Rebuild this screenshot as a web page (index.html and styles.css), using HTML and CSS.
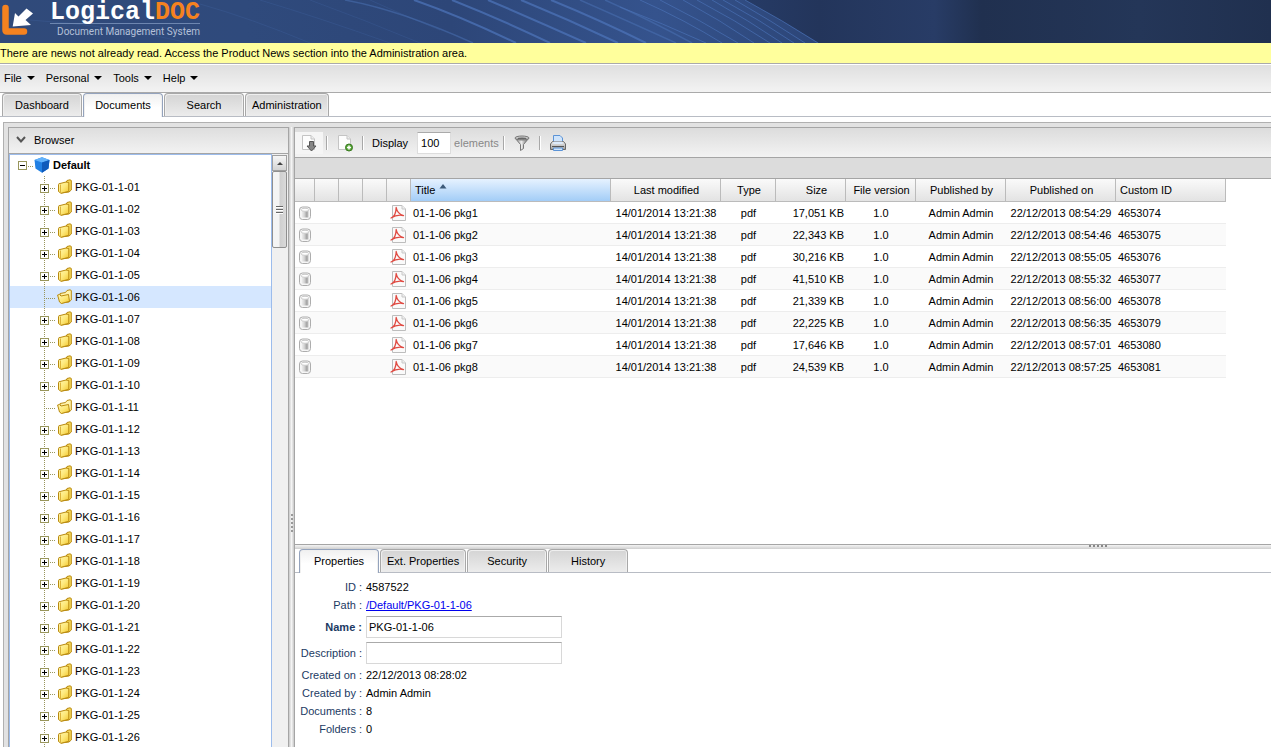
FILE: index.html
```
<!DOCTYPE html>
<html lang="en">
<head>
<meta charset="utf-8">
<title>LogicalDOC</title>
<link rel="stylesheet" href="styles.css">
</head>
<body>
<svg class="defs" aria-hidden="true">
  <defs>
    <linearGradient id="gold" x1="0" y1="0" x2="1" y2="1"><stop offset="0" stop-color="#fff7b0"/><stop offset=".5" stop-color="#fde97c"/><stop offset="1" stop-color="#f2c62c"/></linearGradient>
    <linearGradient id="metal"><stop offset="0" stop-color="#f2f2f2"/><stop offset=".4" stop-color="#d4d4d4"/><stop offset=".75" stop-color="#a4a4a4"/><stop offset="1" stop-color="#c4c4c4"/></linearGradient>
    <linearGradient id="funnel"><stop offset="0" stop-color="#777"/><stop offset=".45" stop-color="#eee"/><stop offset="1" stop-color="#555"/></linearGradient>
    <linearGradient id="base" x1="0" y1="0" x2="0" y2="1"><stop offset="0" stop-color="#f2f2f2"/><stop offset="1" stop-color="#9c9c9c"/></linearGradient>
    <linearGradient id="sky"><stop offset="0" stop-color="#304a7a"/><stop offset=".3" stop-color="#2f4a7c"/><stop offset=".55" stop-color="#2d4678"/><stop offset=".8" stop-color="#35538d"/><stop offset="1" stop-color="#2c4577"/></linearGradient>
    <linearGradient id="night"><stop offset="0" stop-color="#263b66"/><stop offset=".14" stop-color="#23355b"/><stop offset=".36" stop-color="#283c66"/><stop offset=".45" stop-color="#20304f"/><stop offset=".75" stop-color="#243658"/><stop offset="1" stop-color="#20304f"/></linearGradient>
  </defs>
  <symbol id="folder" viewBox="0 0 16 16"><path d="M9 3.500 10 1.500 13 .8 14.300 1.500V11L12 13 4 14z" fill="#f6d95c" stroke="#b98a10" stroke-linejoin="round"/><path d="M1.500 5.500Q1.500 4.500 3 4.500L9 3 11.800 3.500V12.300L4 14.300 1.500 12.500z" fill="url(#gold)" stroke="#b98a10" stroke-linejoin="round"/><path d="M3.500 5.500V13.500" stroke="#dcb23a" fill="none"/></symbol>
  <symbol id="folder-open" viewBox="0 0 16 16"><path d="M3 4.500 8.500 3.500 10 1.500 13 .8 14.300 1.500V11L12 13 4 14z" fill="#fff3ac" stroke="#b98a10" stroke-linejoin="round"/><path d="M.6 6 2.500 5.500 4 7 11.500 5.500 12.500 12.300 4.500 14.500 2.500 13z" fill="url(#gold)" stroke="#b98a10" stroke-linejoin="round"/></symbol>
  <symbol id="pdf" viewBox="0 0 16 16"><path d="M2.500.5H12L15.500 4V15.500H2.500z" fill="#fafafa" stroke="#bdbdbd"/><path d="M12 .5V4H15.500" fill="#eee" stroke="#c8c8c8"/><path d="M1 13C4 12 6 7.500 6.200 2.500 7 7 9.500 9.500 13.500 10.600 9 9.600 5 10.500 1 13z" fill="none" stroke="#e04a42" stroke-width="1.300" stroke-linejoin="round"/></symbol>
  <symbol id="store" viewBox="0 0 16 16"><rect x="2.500" y="2" width="11" height="12.500" rx="3" fill="#f6f6f6" stroke="#adadad"/><path d="M4.500 5.500H11.500V12.500H4.500z" fill="url(#metal)"/><ellipse cx="8" cy="4.800" rx="4" ry="1.500" fill="#fff" stroke="#ccc"/></symbol>
</svg>

<header class="banner">
  <svg class="banner-art" viewBox="0 0 1271 43" preserveAspectRatio="none" aria-hidden="true">
    <rect width="820" height="43" fill="url(#sky)"/>
    <path d="M745 0H1271V43H819Q782 20 745 0z" fill="url(#night)"/>
    <g fill="none" stroke="#4c73b8">
      <path stroke-opacity=".2" d="M30 20Q110 25 190 43M200 4Q250 18 310 43M260 0Q320 18 390 43M310 0Q365 20 420 43M370 0Q410 18 440 30"/>
      <path stroke-opacity=".5" stroke-width="1.500" d="M345 0Q400 10 473 43M580 0Q630 22 676 43M605 0Q650 20 692 43"/>
      <path stroke-opacity=".75" stroke-width="2" d="M414 0Q460 16 516 43M452 0Q500 19 550 43M488 0Q535 20 586 43M521 0Q570 20 618 43M551 0Q600 20 646 43"/>
      <path stroke-opacity=".65" d="M620 7Q662 23 706 43M640 0Q685 20 722 43M660 0Q700 20 738 43M683 0Q720 20 754 43M697 0Q735 20 770 43M712 0Q748 20 782 43M723 0Q760 20 794 43M735 0Q770 20 805 43M745 0Q782 20 818 43"/>
    </g>
  </svg>
  <svg class="brand-mark" viewBox="0 0 34 34" aria-hidden="true"><path d="M5.500 5V27Q5.500 28.500 7 28.500H24" fill="none" stroke="#f5821f" stroke-width="6.500" stroke-linecap="round"/><path d="M12.700 23.500 15 10 18.500 13.500 26.500 5.500 33 10.500 25.500 17 31 22z" fill="#fff"/></svg>
  <div class="brand">
    <div class="brand-name">Logical<span>DOC</span></div>
    <div class="brand-sub">Document Management System</div>
  </div>
</header>

<p class="news">There are news not already read. Access the Product News section into the Administration area.</p>

<nav class="menu">
  <button type="button">File</button><button type="button">Personal</button><button type="button">Tools</button><button type="button">Help</button>
</nav>

<div class="tabs main-tabs" role="tablist">
  <button type="button" role="tab">Dashboard</button>
  <button type="button" role="tab" aria-selected="true">Documents</button>
  <button type="button" role="tab">Search</button>
  <button type="button" role="tab">Administration</button>
</div>

<main class="workspace">
  <section class="browser">
    <h2><svg viewBox="0 0 10 7" aria-hidden="true"><path d="M1 1 5 5.500 9 1" fill="none" stroke="#555" stroke-width="2"/></svg>Browser</h2>
    <div class="tree-wrap">
      <ul class="tree" id="tree">
        <li class="root"><button type="button" class="toggle open" aria-label="Collapse"></button><i class="dots"></i><svg class="cube" viewBox="0 0 16 16" aria-hidden="true"><path d="M8 .3 15.500 3 14.500 11.500 8 15.700 1.500 11.500 .5 3z" fill="#2180e4"/><path d="M8 .3 15.500 3 8 5.500 .5 3z" fill="#62b2fb"/><path d="M8 5.500 15.500 3 14.500 11.500 8 15.700z" fill="#0f5abb"/></svg><b>Default</b></li>
      </ul>
      <div class="scroll" aria-hidden="true"><div class="scroll-up"></div><div class="scroll-thumb"><i></i></div></div>
    </div>
  </section>
  <div class="split-v"><i></i></div>
  <div class="content">
    <section class="listing">
      <div class="toolbar">
        <button type="button" class="hot" aria-label="Download"><svg viewBox="0 0 18 18"><path d="M2.500 1.500H11L14.500 5V15.500H2.500z" fill="#fdfdfd" stroke="#c4c4c4"/><path d="M11 1.500V5H14.500" fill="#eee" stroke="#c4c4c4"/><path d="M9.500 7.500H13.500V12H16L11.500 17 7 12H9.500z" fill="#868686" stroke="#555"/></svg></button>
        <i class="sep"></i>
        <button type="button" aria-label="Add document"><svg viewBox="0 0 18 18"><path d="M2.500 1.500H11L14.500 5V15.500H2.500z" fill="#fdfdfd" stroke="#c4c4c4"/><path d="M11 1.500V5H14.500" fill="#eee" stroke="#c4c4c4"/><circle cx="13" cy="13.500" r="3.500" fill="#57a639" stroke="#39791f"/><path d="M13 11.500V15.500M11 13.500H15" stroke="#fff" stroke-width="1.500"/></svg></button>
        <i class="sep"></i>
        <label for="display">Display</label><input id="display" value="100"><span class="muted">elements</span>
        <i class="sep"></i>
        <button type="button" aria-label="Filter"><svg viewBox="0 0 18 18"><path d="M2 4 7.500 10.500V16.500L10.500 14.500V10.500L16 4z" fill="url(#funnel)" stroke="#777"/><ellipse cx="9" cy="4" rx="7" ry="2" fill="#ccc" stroke="#777"/><ellipse cx="9" cy="4.500" rx="4.500" ry="1" fill="#666"/></svg></button>
        <i class="sep"></i>
        <button type="button" aria-label="Print"><svg viewBox="0 0 18 18"><path d="M4.500 9V1.500H11L13.500 4V9" fill="#cfe4fb" stroke="#5b93d6"/><path d="M3.500 7.500H14.500L16.500 10V15.500H1.500V10z" fill="url(#base)" stroke="#666"/><path d="M4.500 7.500H13.500V10H4.500z" fill="#dcebfc"/><path d="M3 12.500H15" stroke="#555"/><path d="M4.500 14H13.500V16.500H4.500z" fill="#cfe4fb" stroke="#5b93d6"/></svg></button>
      </div>
      <div class="strip"></div>
      <table class="grid">
        <colgroup><col class="w20"><col class="w24"><col class="w24"><col class="w24"><col class="w24"><col class="w200"><col class="w110"><col class="w55"><col class="w70"><col class="w70"><col class="w90"><col class="w110"><col class="w110"></colgroup>
        <thead><tr><th></th><th></th><th></th><th></th><th></th><th class="sorted">Title<svg viewBox="0 0 8 5" aria-hidden="true"><path d="M4 0 7.500 4.500H.5z" fill="#3d5a78"/></svg></th><th>Last modified</th><th>Type</th><th class="size">Size</th><th>File version</th><th>Published by</th><th>Published on</th><th class="left">Custom ID</th></tr></thead>
        <tbody id="rows"></tbody>
      </table>
    </section>
    <div class="split-h"><i></i></div>
    <section class="details">
      <div class="tabs" role="tablist">
        <button type="button" role="tab" aria-selected="true">Properties</button>
        <button type="button" role="tab">Ext. Properties</button>
        <button type="button" role="tab">Security</button>
        <button type="button" role="tab">History</button>
      </div>
      <form class="props">
        <span class="label">ID :</span><span>4587522</span>
        <span class="label">Path :</span><a href="#path">/Default/PKG-01-1-06</a>
        <label for="name"><b>Name :</b></label><input id="name" value="PKG-01-1-06">
        <label for="desc">Description :</label><input id="desc">
        <span class="label">Created on :</span><span>22/12/2013 08:28:02</span>
        <span class="label">Created by :</span><span>Admin Admin</span>
        <span class="label">Documents :</span><span>8</span>
        <span class="label">Folders :</span><span>0</span>
      </form>
    </section>
  </div>
</main>
<script src="app.js"></script>
</body>
</html>
```

FILE: styles.css
```
* { box-sizing: border-box; }
body {
  margin: 0;
  height: 100vh;
  display: flex;
  flex-direction: column;
  overflow: hidden;
  background: #fff;
  color: #000;
  font: 11px/14px "Liberation Sans", Arial, sans-serif;
}
button, input { font: inherit; color: inherit; }
button { border: 0; padding: 0; background: none; }
.defs { position: absolute; width: 0; height: 0; }

/* Banner */
.banner { position: relative; flex: none; height: 43px; display: flex; background: #20304f; }
.banner-art { position: absolute; inset: 0; width: 100%; height: 100%; }
.brand-mark { position: relative; flex: none; width: 34px; height: 34px; margin-top: 3px; }
.brand { position: relative; width: 166px; display: flex; flex-direction: column; align-items: flex-end; }
.brand-name {
  height: 24px;
  border-bottom: 1px solid #6d86b0;
  color: #fff;
  font: bold 25px/26px "Liberation Mono", monospace;
}
.brand-name span { color: #f5821f; }
.brand-sub { padding-top: 1px; color: #b4c0d8; font: 10px/14px Roboto, sans-serif; }

.news { flex: none; margin: 0; height: 21px; line-height: 21px; background: #ffff9c; border-bottom: 1px solid #aaa; }

.menu {
  flex: none;
  display: flex;
  gap: 11px;
  height: 28px;
  margin-top: 1px;
  padding: 0 4px 2px;
  border-bottom: 1px solid #aaa;
  background: linear-gradient(#dfdfdf, #f3f3f3);
}
.menu button { display: flex; align-items: center; gap: 5px; }
.menu button::after { content: ""; border: 4px solid transparent; border-top-color: #000; border-bottom: 0; }

/* Tabs */
.tabs { flex: none; display: flex; gap: 1px; height: 24px; border-bottom: 1px solid #b8bcc4; }
.main-tabs { padding-left: 2px; }
.tabs button {
  min-width: 80px;
  height: 23px;
  padding: 0 6px;
  border: 1px solid #a8a8a8;
  border-bottom: 0;
  border-radius: 4px 4px 0 0;
  background: linear-gradient(#d4d4d4, #ececec);
  box-shadow: inset 1px 1px #efefef, inset -1px 0 #efefef;
}
.tabs button[aria-selected="true"] {
  height: 24px;
  padding-bottom: 2px;
  border-color: #94a3bd;
  background: linear-gradient(#f0f0f0, #fff 60%);
}

/* Workspace */
.workspace {
  flex: 1;
  min-height: 0;
  display: flex;
  margin: 5px 0 0 3px;
  padding: 4px 0 0 4px;
  border: solid #b0b0b0;
  border-width: 1px 0 0 1px;
  background: #e2e2e2;
}
.browser { flex: none; width: 281px; display: flex; flex-direction: column; border: 1px solid #a5a5a5; border-bottom: 0; }
.browser h2 {
  flex: none;
  display: flex;
  align-items: center;
  gap: 8px;
  height: 26px;
  margin: 0;
  padding: 0 0 2px 7px;
  border-bottom: 1px solid #a5a5a5;
  background: linear-gradient(#dedede, #f2f2f2);
  font-size: 11px;
  font-weight: normal;
}
.browser h2 svg { width: 10px; height: 7px; }
.tree-wrap { flex: 1; min-height: 0; display: flex; background: #fff; }
.tree {
  flex: 1;
  margin: 0;
  padding: 0;
  overflow: hidden;
  list-style: none;
  border: solid #9cbcec;
  border-width: 1px 1px 0;
}
.tree li { display: flex; align-items: center; height: 22px; padding-left: 30px; }
.tree .root { height: 21px; padding: 0 0 1px 8px; }
.tree .current { background: #d5e7ff; }
.tree svg { width: 16px; height: 16px; margin: 0 2px; }
.tree .cube { margin: 0 3px 0 0; }
.rail {
  flex: none;
  width: 9px;
  height: 22px;
  display: flex;
  align-items: center;
  padding-top: 2px;
  background: repeating-linear-gradient(#99965c 0 1px, transparent 1px 2px) 4px 0 / 1px 100% no-repeat;
}
.toggle {
  width: 9px;
  height: 9px;
  border: 1px solid #99965c;
  background: linear-gradient(#000, #000) center / 5px 1px no-repeat, linear-gradient(#000, #000) center / 1px 5px no-repeat, #fff;
}
.toggle.open { background: linear-gradient(#000, #000) center / 5px 1px no-repeat, #fff; }
.dots { width: 6px; height: 1px; margin-top: 2px; background: repeating-linear-gradient(90deg, transparent 0 1px, #99965c 1px 2px); }
.root .dots { width: 7px; }
.leaf .dots { width: 10px; margin-left: -4px; }
.scroll { flex: none; width: 16px; background: #f0f0f0; display: flex; flex-direction: column; padding: 1px 1px 0 0; }
.scroll-up { display: grid; place-items: center; height: 16px; border: 1px solid #a0a0a0; background: linear-gradient(#f6f6f6, #d4d4d4); }
.scroll-up::after { content: ""; border: 3px solid transparent; border-bottom-color: #444; border-top: 0; }
.scroll-thumb { display: grid; place-items: center; height: 77px; border: 1px solid #8f8f8f; border-radius: 2px; background: linear-gradient(90deg, #f4f4f4 45%, #cfcfcf 55%, #dadada); }
.scroll-thumb i { width: 7px; height: 8px; background: repeating-linear-gradient(#666 0 1px, #fff 1px 2px, #ddd 2px 3px); }

.split-v { flex: none; width: 5px; display: grid; place-items: center; background: linear-gradient(90deg, #c8c8c8, #f4f4f4 50%, #c8c8c8); }
.split-v i { width: 2px; height: 18px; margin-top: 172px; background: repeating-linear-gradient(#999 0 2px, transparent 2px 4px); }
.content { flex: 1; min-width: 0; display: flex; flex-direction: column; border-left: 1px solid #a5a5a5; border-top: 1px solid #a5a5a5; background: #fff; }
.listing { flex: 1; min-height: 0; overflow: hidden; }
.toolbar { display: flex; align-items: center; height: 30px; border-bottom: 1px solid #a5a5a5; background: linear-gradient(#dcdcdc, #f3f3f3); }
.toolbar button { display: grid; place-items: center; width: 28px; height: 22px; }
.toolbar .hot { background: #f5f5f5; }
.toolbar svg { width: 18px; height: 18px; }
.sep { width: 2px; height: 14px; margin: 0 3px; border-left: 1px solid #a8a8a8; border-right: 1px solid #fff; }
.toolbar label { margin: 0 9px 0 5px; }
.toolbar input { width: 34px; height: 22px; padding: 0 3px; border: 1px solid #ddd; border-top-color: #aaa; background: #fff; }
.muted { margin: 0 1px 0 3px; color: #888; }
.strip { height: 21px; border-bottom: 1px solid #a5a5a5; background: #dcdcdc; }

.grid { width: 931px; table-layout: fixed; border-collapse: separate; border-spacing: 0; }
.w20 { width: 20px; } .w24 { width: 24px; } .w55 { width: 55px; } .w70 { width: 70px; }
.w90 { width: 90px; } .w110 { width: 110px; } .w200 { width: 200px; }
.grid th {
  height: 23px;
  padding: 0 2px 0 4px;
  border-right: 1px solid #bbb;
  border-bottom: 1px solid #bbb;
  background: linear-gradient(#fafafa, #e3e3e3);
  font-weight: normal;
  white-space: nowrap;
}
.grid .sorted { text-align: left; background: linear-gradient(#e6f2ff, #a3cdf7); }
.sorted svg { width: 8px; height: 5px; margin: 0 0 5px 4px; }
.grid .size { padding-left: 14px; }
.grid .left { text-align: left; }
.grid td { height: 22px; padding: 0 2px; border-bottom: 1px solid #ededed; text-align: center; white-space: nowrap; }
.grid tr:nth-child(even) td { background: #fafafa; }
.grid td.start { text-align: left; }
.grid td.end { text-align: right; }
.grid td svg { display: block; width: 18px; height: 16px; }
.grid td:first-child svg { width: 16px; }

.split-h { flex: none; height: 5px; display: grid; justify-items: center; padding-left: 630px; border-top: 1px solid #a5a5a5; background: linear-gradient(#f4f4f4, #cfcfcf); }
.split-h i { width: 18px; height: 2px; background: repeating-linear-gradient(90deg, #888 0 2px, transparent 2px 4px); }

.details { flex: none; height: 198px; }
.details .tabs { padding-left: 4px; }
.props { display: grid; grid-template-columns: 63px 196px; gap: 4px; padding: 7px 0 0 4px; }
.props > * { align-self: center; }
.props .label, .props label { display: flex; justify-content: flex-end; color: #1c3a63; white-space: nowrap; }
.props input { width: 196px; height: 22px; padding: 0 2px; border: 1px solid #d8d8d8; border-top-color: #aaa; }
.props a { color: #00e; }
```

FILE: app.js
```
const leaves = [6, 11];
document.getElementById('tree').insertAdjacentHTML('beforeend', Array.from({ length: 26 }, (_, i) => {
  const n = i + 1, leaf = leaves.includes(n);
  return `<li class="${leaf ? 'leaf' : ''}${n === 6 ? ' current' : ''}"><span class="rail">${leaf ? '' : '<button type="button" class="toggle" aria-label="Expand"></button>'}</span><i class="dots"></i><svg aria-hidden="true"><use href="#folder${leaf ? '-open' : ''}"/></svg>PKG-01-1-${String(n).padStart(2, '0')}</li>`;
}).join(''));

const docs = [
  ['17,051', '08:54:29'], ['22,343', '08:54:46'], ['30,216', '08:55:05'], ['41,510', '08:55:32'],
  ['21,339', '08:56:00'], ['22,225', '08:56:35'], ['17,646', '08:57:01'], ['24,539', '08:57:25']
];
document.getElementById('rows').innerHTML = docs.map(([size, time], i) => `<tr>
  <td><svg><use href="#store"/></svg></td><td></td><td></td><td></td><td><svg><use href="#pdf"/></svg></td>
  <td class="start">01-1-06 pkg${i + 1}</td><td>14/01/2014 13:21:38</td><td>pdf</td><td class="end">${size} KB</td>
  <td>1.0</td><td>Admin Admin</td><td>22/12/2013 ${time}</td><td class="start">${4653074 + i}</td></tr>`).join('');
```
